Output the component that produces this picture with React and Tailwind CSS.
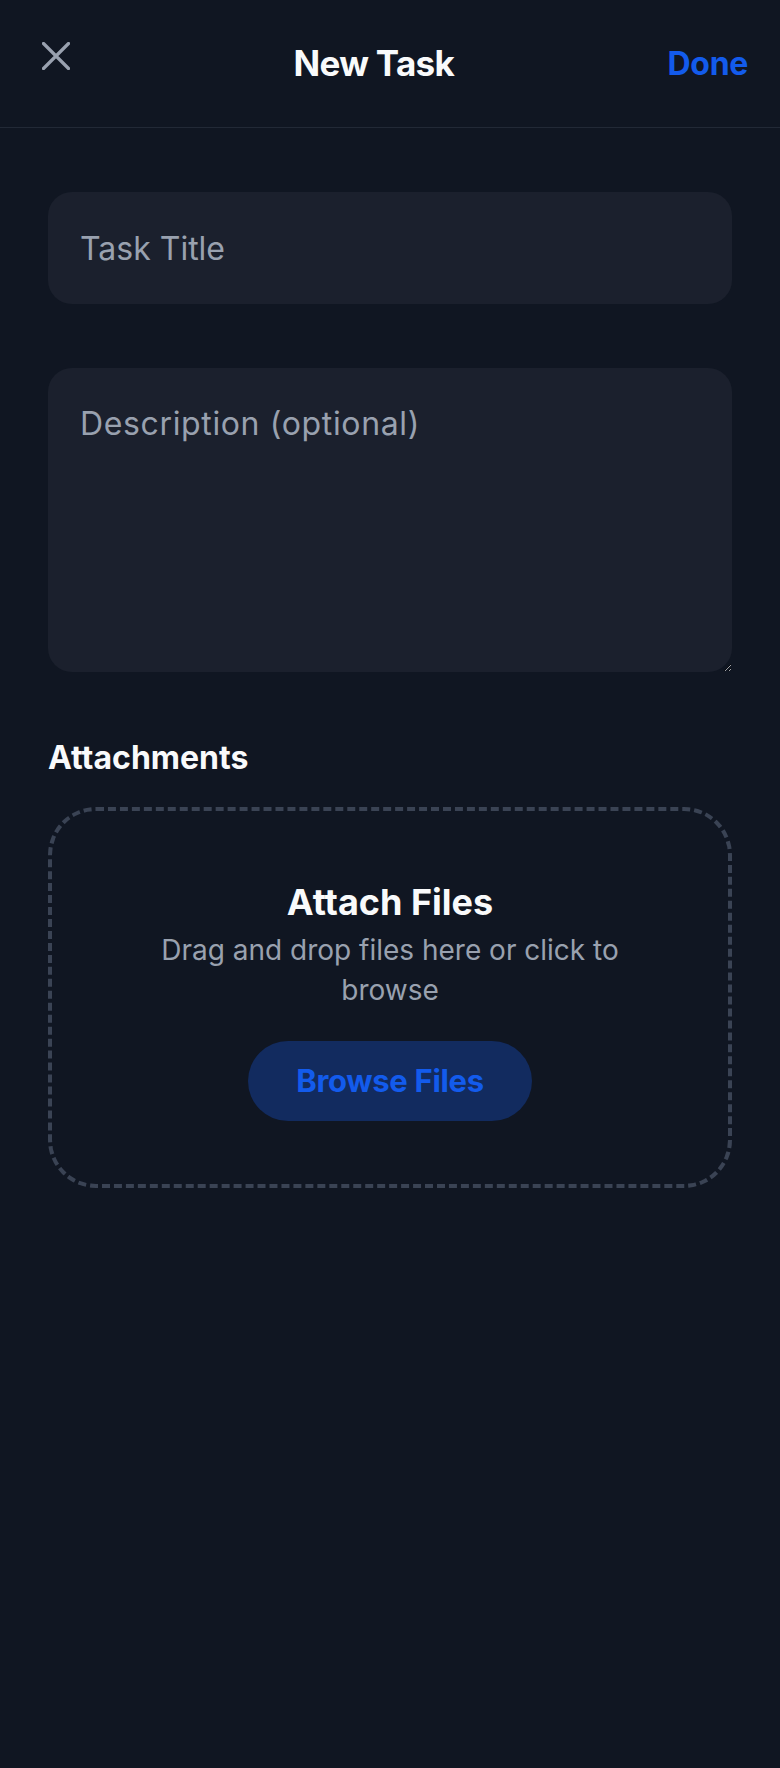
import React from 'react';

// New Task sheet — dark form with title, description and an attachment drop zone
const CloseIcon = () => (
    <svg width="28" height="28" viewBox="0 0 28 28" fill="none" className="text-gray-400">
        <path d="M1.5 1.5L26.5 26.5M26.5 1.5L1.5 26.5" stroke="currentColor" strokeWidth="3.2" strokeLinecap="round" />
    </svg>
);

export default function App() {
    return (
        <div className="min-h-[1768px] w-full bg-[#101622] text-white font-['Inter','Noto_Sans',sans-serif]">
            {/* Header */}
            <header className="h-[128px] flex items-center justify-between px-8 border-b border-[#222936]">
                <button className="w-12 h-12 flex items-center justify-center mb-[15px]">
                    <CloseIcon />
                </button>
                <h1 className="text-[35px] font-bold tracking-[-0.02em] text-gray-50">New Task</h1>
                <button className="text-[32px] font-bold text-[#135bec] tracking-[-0.01em]">Done</button>
            </header>

            {/* Form */}
            <main className="px-12 pt-16">
                <input
                    type="text"
                    placeholder="Task Title"
                    className="w-full h-[112px] rounded-[24px] bg-[#1b202d] px-8 text-[32px] text-white placeholder:text-gray-400 outline-none"
                />

                <textarea
                    placeholder="Description (optional)"
                    className="block w-full h-[304px] mt-16 rounded-[24px] bg-[#1b202d] p-8 text-[32px] leading-[48px] tracking-[0.02em] text-white placeholder:text-gray-400 outline-none"
                />

                {/* Attachments */}
                <h2 className="mt-[62px] mb-[25px] text-[32px] leading-[48px] font-bold text-gray-50">Attachments</h2>

                <div className="border-4 border-dashed border-[#3a4354] rounded-[48px] pt-[63px] pb-[63px] flex flex-col items-center text-center">
                    <h3 className="text-[36px] leading-[56px] font-bold text-gray-50">Attach Files</h3>
                    <p className="max-w-[500px] text-[28px] leading-[40px] text-gray-400">
                        Drag and drop files here or click to browse
                    </p>
                    <button className="mt-[31px] h-[80px] px-12 rounded-full bg-[#122b5f] text-[31px] font-bold text-[#135bec] tracking-[-0.01em]">
                        Browse Files
                    </button>
                </div>
            </main>
        </div>
    );
}
